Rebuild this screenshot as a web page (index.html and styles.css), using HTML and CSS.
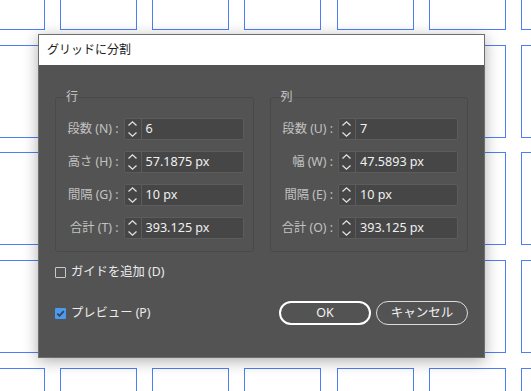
FILE: index.html
```html
<!DOCTYPE html>
<html lang="ja">
<head>
<meta charset="utf-8">
<title>グリッドに分割</title>
<link rel="stylesheet" href="styles.css">
</head>
<body>
<div class="canvas">
  <div class="artboards">
    <div class="cell"></div><div class="cell"></div><div class="cell"></div><div class="cell"></div><div class="cell"></div><div class="cell"></div><div class="cell"></div>
    <div class="cell"></div><div class="cell"></div><div class="cell"></div><div class="cell"></div><div class="cell"></div><div class="cell"></div><div class="cell"></div>
    <div class="cell"></div><div class="cell"></div><div class="cell"></div><div class="cell"></div><div class="cell"></div><div class="cell"></div><div class="cell"></div>
    <div class="cell"></div><div class="cell"></div><div class="cell"></div><div class="cell"></div><div class="cell"></div><div class="cell"></div><div class="cell"></div>
    <div class="cell"></div><div class="cell"></div><div class="cell"></div><div class="cell"></div><div class="cell"></div><div class="cell"></div><div class="cell"></div>
    <div class="cell"></div><div class="cell"></div><div class="cell"></div><div class="cell"></div><div class="cell"></div><div class="cell"></div><div class="cell"></div>
  </div>

  <div class="dialog">
    <div class="titlebar">グリッドに分割</div>
    <div class="content">
      <div class="groups">
        <fieldset class="group">
          <legend>行</legend>
          <div class="rows">
            <span class="lbl">段数 (N) :</span>
            <div class="spin"><span class="arrows"><svg width="16" height="20" viewBox="0 0 16 20"><path d="M3.5 6.5 L7.5 2.8 L11.5 6.5 M3.5 13.5 L7.5 17.2 L11.5 13.5"/></svg></span><span class="val">6</span></div>
            <span class="lbl">高さ (H) :</span>
            <div class="spin"><span class="arrows"><svg width="16" height="20" viewBox="0 0 16 20"><path d="M3.5 6.5 L7.5 2.8 L11.5 6.5 M3.5 13.5 L7.5 17.2 L11.5 13.5"/></svg></span><span class="val">57.1875 px</span></div>
            <span class="lbl">間隔 (G) :</span>
            <div class="spin"><span class="arrows"><svg width="16" height="20" viewBox="0 0 16 20"><path d="M3.5 6.5 L7.5 2.8 L11.5 6.5 M3.5 13.5 L7.5 17.2 L11.5 13.5"/></svg></span><span class="val">10 px</span></div>
            <span class="lbl">合計 (T) :</span>
            <div class="spin"><span class="arrows"><svg width="16" height="20" viewBox="0 0 16 20"><path d="M3.5 6.5 L7.5 2.8 L11.5 6.5 M3.5 13.5 L7.5 17.2 L11.5 13.5"/></svg></span><span class="val">393.125 px</span></div>
          </div>
        </fieldset>
        <fieldset class="group">
          <legend>列</legend>
          <div class="rows">
            <span class="lbl">段数 (U) :</span>
            <div class="spin"><span class="arrows"><svg width="16" height="20" viewBox="0 0 16 20"><path d="M3.5 6.5 L7.5 2.8 L11.5 6.5 M3.5 13.5 L7.5 17.2 L11.5 13.5"/></svg></span><span class="val">7</span></div>
            <span class="lbl">幅 (W) :</span>
            <div class="spin"><span class="arrows"><svg width="16" height="20" viewBox="0 0 16 20"><path d="M3.5 6.5 L7.5 2.8 L11.5 6.5 M3.5 13.5 L7.5 17.2 L11.5 13.5"/></svg></span><span class="val">47.5893 px</span></div>
            <span class="lbl">間隔 (E) :</span>
            <div class="spin"><span class="arrows"><svg width="16" height="20" viewBox="0 0 16 20"><path d="M3.5 6.5 L7.5 2.8 L11.5 6.5 M3.5 13.5 L7.5 17.2 L11.5 13.5"/></svg></span><span class="val">10 px</span></div>
            <span class="lbl">合計 (O) :</span>
            <div class="spin"><span class="arrows"><svg width="16" height="20" viewBox="0 0 16 20"><path d="M3.5 6.5 L7.5 2.8 L11.5 6.5 M3.5 13.5 L7.5 17.2 L11.5 13.5"/></svg></span><span class="val">393.125 px</span></div>
          </div>
        </fieldset>
      </div>

      <div class="check-row guides"><span class="cb"></span><span>ガイドを追加 (D)</span></div>

      <div class="footer">
        <div class="check-row"><span class="cb checked"><svg width="11" height="11" viewBox="0 0 11 11"><path d="M2.3 5.6 L4.5 7.8 L8.8 3.2"/></svg></span><span>プレビュー (P)</span></div>
        <div class="buttons">
          <button class="btn primary">OK</button>
          <button class="btn">キャンセル</button>
        </div>
      </div>
    </div>
  </div>
</div>
</body>
</html>
```

FILE: styles.css
```css
* { box-sizing: border-box; }

html, body {
  margin: 0;
  padding: 0;
  background: #ffffff;
}

body {
  font-family: "Noto Sans", "Noto Sans CJK JP", sans-serif;
  font-size: 12px;
}

.canvas {
  position: relative;
  width: 531px;
  height: 391px;
  overflow: hidden;
  background: #ffffff;
}

.artboards {
  display: grid;
  grid-template-columns: repeat(7, 77px);
  grid-auto-rows: 93px;
  column-gap: 15.17px;
  row-gap: 14.7px;
  margin: -63px 0 0 -32px;
}

.cell {
  border: 1px solid #4d7ef6;
}

.dialog {
  position: absolute;
  left: 38px;
  top: 34px;
  width: 447px;
  height: 324px;
  border: 1px solid #6e6e6e;
  background: #535353;
  box-shadow: 0 3px 14px rgba(0, 0, 0, 0.32);
  display: flex;
  flex-direction: column;
}

.titlebar {
  height: 30px;
  background: #ffffff;
  color: #1b1b1b;
  padding-left: 8px;
  line-height: 30px;
  font-size: 12px;
}

.content {
  padding: 24px 16px 0 16px;
  color: #e4e4e4;
}

.groups {
  display: flex;
  gap: 16px;
}

.group {
  flex: 1;
  min-width: 0;
  margin: 0;
  padding: 13px 9px 12px 10px;
  border: 1px solid #494949;
  border-radius: 3px;
}

.group legend {
  padding: 0;
  font-size: 12px;
  line-height: 16px;
  color: #c6c6c6;
}

.rows {
  display: grid;
  grid-template-columns: 1fr 120px;
  column-gap: 5px;
  row-gap: 11px;
  align-items: center;
}

.lbl {
  text-align: right;
  color: #c2c2c2;
  white-space: nowrap;
  line-height: 16px;
  font-size: 12.3px;
}

.spin {
  display: flex;
  height: 22px;
  border: 1px solid #5c5c5c;
  border-radius: 2px;
  background: #464646;
}

.arrows {
  width: 17px;
  border-right: 1px solid #5c5c5c;
  display: flex;
  align-items: center;
}

.arrows svg {
  display: block;
}

.arrows path {
  fill: none;
  stroke: #e2e2e2;
  stroke-width: 1.3;
}

.val {
  padding-left: 4px;
  line-height: 20px;
  font-size: 12.6px;
  color: #f0f0f0;
  white-space: nowrap;
}

.check-row {
  display: flex;
  align-items: center;
  gap: 5px;
  line-height: 16px;
  font-size: 12.3px;
  color: #ececec;
}

.guides {
  margin-top: 12px;
}

.cb {
  width: 11px;
  height: 11px;
  border: 1px solid #c8c8c8;
  border-radius: 1px;
  flex: none;
}

.cb.checked {
  border: none;
  background: #4a9af0;
}

.cb.checked svg {
  display: block;
}

.cb.checked path {
  fill: none;
  stroke: #38414d;
  stroke-width: 1.8;
}

.footer {
  margin-top: 21px;
  display: flex;
  align-items: center;
  justify-content: space-between;
}

.buttons {
  display: flex;
  gap: 5px;
}

.btn {
  width: 92px;
  height: 24px;
  border-radius: 12px;
  border: 1px solid #dcdcdc;
  background: transparent;
  color: #f2f2f2;
  font-family: "Noto Sans", "Noto Sans CJK JP", sans-serif;
  font-size: 12.5px;
  line-height: 20px;
  padding: 0;
}

.btn.primary {
  border: 2px solid #ffffff;
}
```
